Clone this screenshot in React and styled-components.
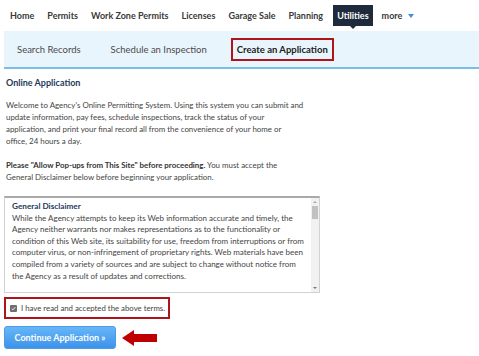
import React from "react";
import styled, { createGlobalStyle } from "styled-components";

const Global = createGlobalStyle`
  html, body { margin: 0; padding: 0; background: #fff; }
  body { font-family: Lato, "Open Sans", "Liberation Sans", sans-serif; color: #444; }
  * { box-sizing: border-box; }
`;

const Page = styled.div`
  width: 479px;
  height: 356px;
  overflow: hidden;
  background: #fff;
`;

const Nav = styled.nav`
  display: flex;
  align-items: center;
  height: 31px;
  padding-left: 10px;
  gap: 13px;
`;

const NavItem = styled.div`
  position: relative;
  font-size: 9px;
  font-weight: 700;
  color: ${(p) => (p.$active ? "#fff" : "#3a3a3a")};
  background: ${(p) => (p.$active ? "#1d2b3c" : "transparent")};
  padding: ${(p) => (p.$active ? "5px 4px" : "0")};
  margin: ${(p) => (p.$active ? "0 -4px 0 -3px" : "0")};
  line-height: 11px;
  display: flex;
  align-items: center;
  gap: 6px;
  &::after {
    content: "";
    display: ${(p) => (p.$active ? "block" : "none")};
    position: absolute;
    left: 50%;
    bottom: -3px;
    margin-left: -3px;
    border-left: 3px solid transparent;
    border-right: 3px solid transparent;
    border-top: 3px solid #1d2b3c;
  }
`;

const Caret = styled.span`
  width: 0;
  height: 0;
  border-left: 3px solid transparent;
  border-right: 3px solid transparent;
  border-top: 4px solid #3d8fe0;
`;

const SubBar = styled.div`
  margin-left: 4px;
  height: 38px;
  background: #e9f5fd;
  border-bottom: 2px solid #7cbcea;
  display: flex;
  align-items: center;
  padding-left: 13px;
`;

const SubItem = styled.div`
  font-size: 9.5px;
  font-weight: ${(p) => (p.$active ? 700 : 400)};
  color: ${(p) => (p.$active ? "#222" : "#4a4a4a")};
  margin-right: ${(p) => p.$mr || 0}px;
  ${(p) =>
    p.$active
      ? `border: 2px solid #b0141b; padding: 4px 4px; line-height: 11px;`
      : ""}
`;

const Content = styled.div`
  padding: 8px 4px 0 4px;
`;

const Heading = styled.h2`
  margin: 0 0 0 2px;
  font-size: 9px;
  font-weight: 700;
  color: #1f3b5c;
  line-height: 12px;
`;

const Para = styled.p`
  margin: ${(p) => p.$mt || 0}px 0 0 2px;
  font-size: 7.9px;
  line-height: 12px;
  color: #444;
  white-space: nowrap;
  strong { font-weight: 700; color: #333; }
`;

const Disclaimer = styled.div`
  margin-top: 13px;
  width: 316px;
  height: 97px;
  border: 1px solid #d2d2d2;
  border-top: 2px solid #a9a9a9;
  display: flex;
`;

const DisclaimerBody = styled.div`
  flex: 1;
  padding: 3px 0 0 7px;
  font-size: 8px;
  line-height: 11.6px;
  color: #444;
  white-space: nowrap;
  overflow: hidden;
`;

const DisclaimerTitle = styled.div`
  font-weight: 700;
  color: #1f3b5c;
  font-size: 8.2px;
`;

const Scrollbar = styled.div`
  width: 8px;
  background: #f1f1f1;
  display: flex;
  flex-direction: column;
  align-items: center;
  padding: 2px 0;
`;

const ScrollArrow = styled.span`
  width: 0;
  height: 0;
  border-left: 2px solid transparent;
  border-right: 2px solid transparent;
  ${(p) => (p.$down ? "border-top: 2px solid #777;" : "border-bottom: 2px solid #aaa;")}
  margin: 1px 0;
`;

const Thumb = styled.div`
  width: 6px;
  height: 13px;
  background: #c1c1c1;
  margin-top: 2px;
`;

const Spacer = styled.div`
  flex: 1;
`;

const AcceptRow = styled.label`
  margin-top: 4px;
  width: 166px;
  height: 22px;
  border: 2px solid #b0141b;
  display: flex;
  align-items: center;
  gap: 4px;
  padding-left: 4px;
  font-size: 7.8px;
  color: #444;
`;

const Check = styled.span`
  width: 7px;
  height: 7px;
  border-radius: 1px;
  background: #6f6f6f;
  display: flex;
  align-items: center;
  justify-content: center;
`;

const ActionRow = styled.div`
  margin-top: 7px;
  display: flex;
  align-items: center;
  gap: 6px;
`;

const Button = styled.button`
  width: 112px;
  height: 23px;
  border: 1px solid #4b9be8;
  border-radius: 3px;
  background: linear-gradient(#66b6f7, #3d93ea);
  color: #fff;
  font-family: inherit;
  font-weight: 700;
  font-size: 9px;
  padding: 0;
  cursor: pointer;
`;

export default function App() {
  return (
    <Page>
      <Global />
      <Nav>
        <NavItem>Home</NavItem>
        <NavItem>Permits</NavItem>
        <NavItem>Work Zone Permits</NavItem>
        <NavItem>Licenses</NavItem>
        <NavItem>Garage Sale</NavItem>
        <NavItem>Planning</NavItem>
        <NavItem $active>Utilities</NavItem>
        <NavItem>
          more <Caret />
        </NavItem>
      </Nav>
      <SubBar>
        <SubItem $mr={30}>Search Records</SubItem>
        <SubItem $mr={24}>Schedule an Inspection</SubItem>
        <SubItem $active>Create an Application</SubItem>
      </SubBar>
      <Content>
        <Heading>Online Application</Heading>
        <Para $mt={10}>
          Welcome to Agency's Online Permitting System. Using this system you can submit and
          <br />
          update information, pay fees, schedule inspections, track the status of your
          <br />
          application, and print your final record all from the convenience of your home or
          <br />
          office, 24 hours a day.
        </Para>
        <Para $mt={12}>
          <strong>Please "Allow Pop-ups from This Site" before proceeding.</strong> You must accept the
          <br />
          General Disclaimer below before beginning your application.
        </Para>
        <Disclaimer>
          <DisclaimerBody>
            <DisclaimerTitle>General Disclaimer</DisclaimerTitle>
            While the Agency attempts to keep its Web information accurate and timely, the
            <br />
            Agency neither warrants nor makes representations as to the functionality or
            <br />
            condition of this Web site, its suitability for use, freedom from interruptions or from
            <br />
            computer virus, or non-infringement of proprietary rights. Web materials have been
            <br />
            compiled from a variety of sources and are subject to change without notice from
            <br />
            the Agency as a result of updates and corrections.
          </DisclaimerBody>
          <Scrollbar>
            <ScrollArrow />
            <Thumb />
            <Spacer />
            <ScrollArrow $down />
          </Scrollbar>
        </Disclaimer>
        <AcceptRow>
          <Check>
            <svg width="5" height="5" viewBox="0 0 10 10">
              <path d="M1.5 5.2 L4 7.6 L8.6 2.2" stroke="#fff" strokeWidth="1.8" fill="none" />
            </svg>
          </Check>
          I have read and accepted the above terms.
        </AcceptRow>
        <ActionRow>
          <Button>Continue Application »</Button>
          <svg width="36" height="18" viewBox="0 0 36 18">
            <polygon points="0,9 12,1 12,5 35,5 35,13 12,13 12,17" fill="#c00000" />
          </svg>
        </ActionRow>
      </Content>
    </Page>
  );
}
